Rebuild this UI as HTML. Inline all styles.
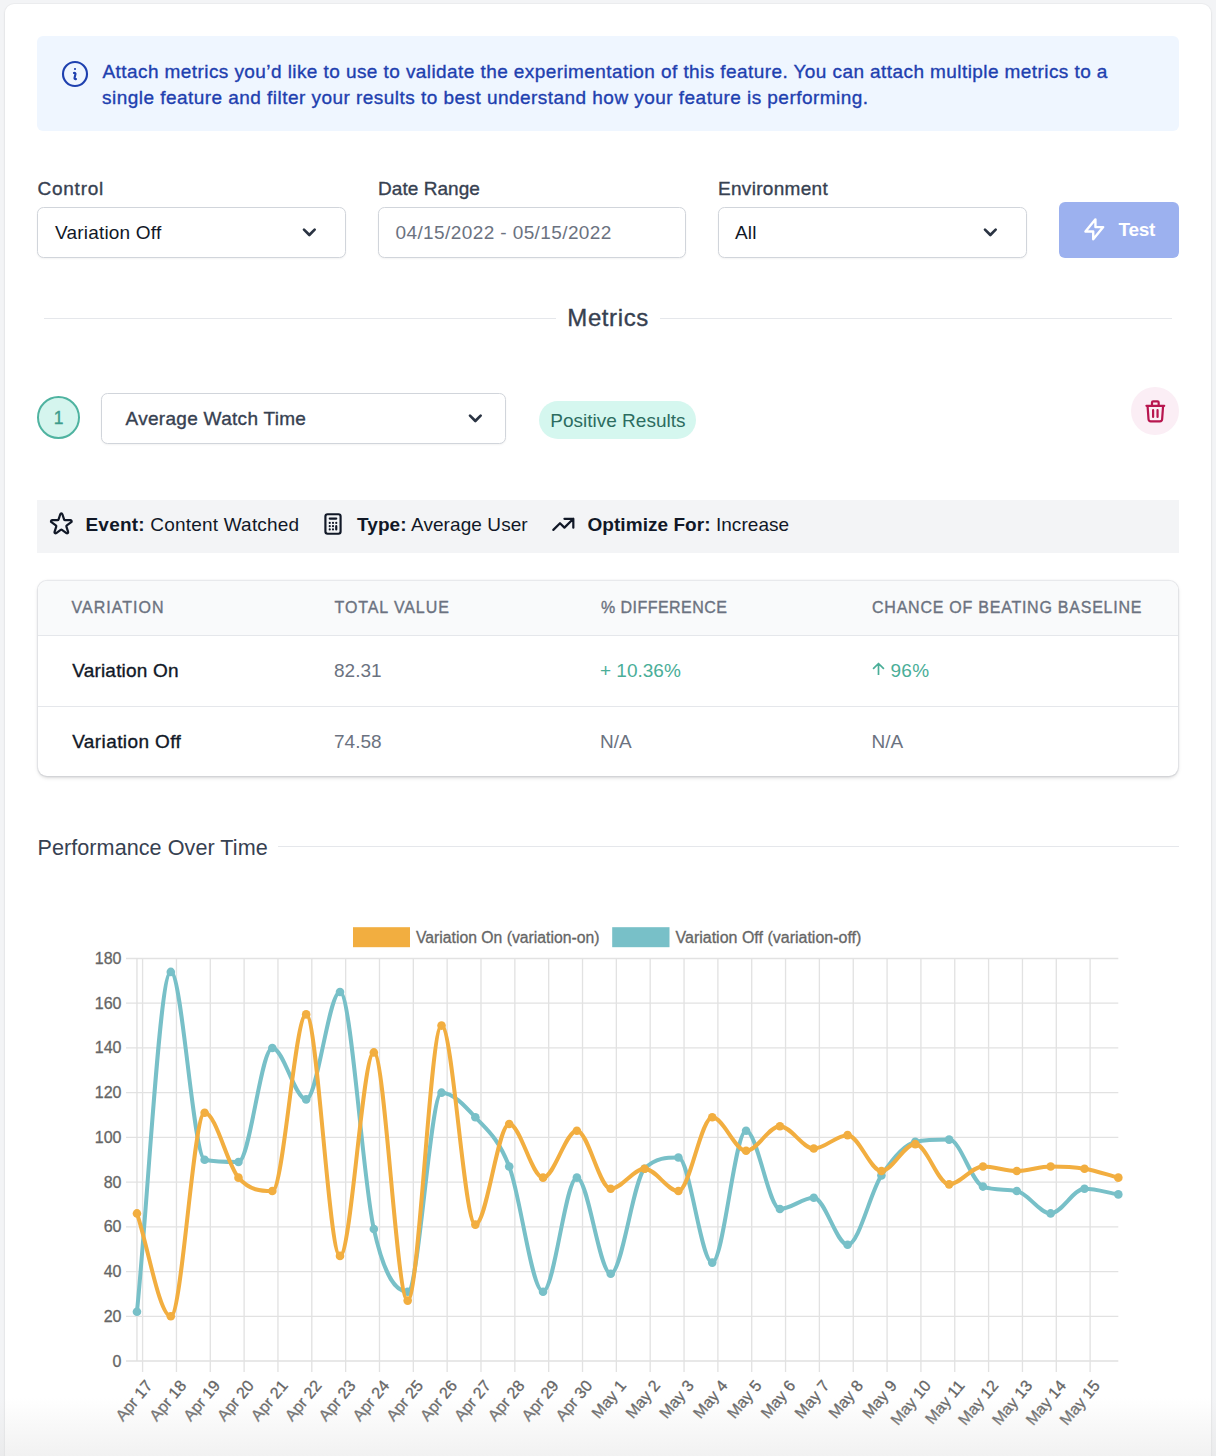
<!DOCTYPE html>
<html><head><meta charset="utf-8"><title>Metrics</title>
<style>
html,body{margin:0;padding:0;}
body{width:1216px;height:1456px;overflow:hidden;position:relative;background:#f3f4f6;font-family:"Liberation Sans",sans-serif;}
.t{position:absolute;white-space:nowrap;line-height:1;}
.chart text{font-family:"Liberation Sans",sans-serif;}
</style></head><body>
<div style="position:absolute;left:5.00px;top:4.00px;width:1206.00px;height:1520.00px;background:#fff;border-radius:9px;box-shadow:0 0 0 1px rgba(0,0,0,0.025),0 1px 3px rgba(0,0,0,0.07);"></div>
<div style="position:absolute;left:37.00px;top:36.00px;width:1142.00px;height:95.00px;background:#eff6ff;border-radius:6px;"></div>
<svg style="position:absolute;left:58.50px;top:57.50px" width="32.00" height="32.00" viewBox="0 0 24 24" fill="none" stroke="#1e40af" stroke-width="1.6" stroke-linecap="round" stroke-linejoin="round"><path d="m11.25 11.25.041-.02a.75.75 0 0 1 1.063.852l-.708 2.836a.75.75 0 0 0 1.063.853l.041-.021M21 12a9 9 0 1 1-18 0 9 9 0 0 1 18 0Zm-9-3.75h.008v.008H12V8.25Z"/></svg>
<div class="t" style="left:102.50px;top:61.92px;font-size:19.00px;color:#1e40af;letter-spacing:0.420px;-webkit-text-stroke:0.35px currentColor;">Attach metrics you’d like to use to validate the experimentation of this feature. You can attach multiple metrics to a</div>
<div class="t" style="left:102.00px;top:87.72px;font-size:19.00px;color:#1e40af;letter-spacing:0.460px;-webkit-text-stroke:0.35px currentColor;">single feature and filter your results to best understand how your feature is performing.</div>
<div class="t" style="left:37.50px;top:178.92px;font-size:19.00px;color:#374151;letter-spacing:0.750px;-webkit-text-stroke:0.35px currentColor;">Control</div>
<div class="t" style="left:378.00px;top:178.92px;font-size:19.00px;color:#374151;letter-spacing:0.050px;-webkit-text-stroke:0.35px currentColor;">Date Range</div>
<div class="t" style="left:718.00px;top:178.92px;font-size:19.00px;color:#374151;letter-spacing:0.300px;-webkit-text-stroke:0.35px currentColor;">Environment</div>
<div style="position:absolute;left:37.00px;top:207.00px;width:309.00px;height:51.00px;background:#fff;border:1.33px solid #d1d5db;border-radius:6.5px;box-sizing:border-box;box-shadow:0 1px 2px rgba(0,0,0,0.05);"></div>
<div class="t" style="left:55.00px;top:223.12px;font-size:19.00px;color:#111827;letter-spacing:0.200px;">Variation Off</div>
<svg style="position:absolute;left:296.00px;top:218.50px" width="26.67" height="26.67" viewBox="0 0 20 20" fill="#2b3443"><path fill-rule="evenodd" d="M5.293 7.293a1 1 0 011.414 0L10 10.586l3.293-3.293a1 1 0 111.414 1.414l-4 4a1 1 0 01-1.414 0l-4-4a1 1 0 010-1.414z" clip-rule="evenodd"/></svg>
<div style="position:absolute;left:378.00px;top:207.00px;width:308.00px;height:51.00px;background:#fff;border:1.33px solid #d1d5db;border-radius:6.5px;box-sizing:border-box;box-shadow:0 1px 2px rgba(0,0,0,0.05);"></div>
<div class="t" style="left:395.50px;top:223.12px;font-size:19.00px;color:#6b7280;letter-spacing:0.400px;">04/15/2022 - 05/15/2022</div>
<div style="position:absolute;left:718.00px;top:207.00px;width:309.00px;height:51.00px;background:#fff;border:1.33px solid #d1d5db;border-radius:6.5px;box-sizing:border-box;box-shadow:0 1px 2px rgba(0,0,0,0.05);"></div>
<div class="t" style="left:735.00px;top:223.12px;font-size:19.00px;color:#111827;letter-spacing:0.200px;">All</div>
<svg style="position:absolute;left:977.00px;top:218.50px" width="26.67" height="26.67" viewBox="0 0 20 20" fill="#2b3443"><path fill-rule="evenodd" d="M5.293 7.293a1 1 0 011.414 0L10 10.586l3.293-3.293a1 1 0 111.414 1.414l-4 4a1 1 0 01-1.414 0l-4-4a1 1 0 010-1.414z" clip-rule="evenodd"/></svg>
<div style="position:absolute;left:1059.00px;top:202.00px;width:120.00px;height:56.00px;background:#9cb1ef;border-radius:6px;"></div>
<svg style="position:absolute;left:1081.20px;top:216.00px" width="26.67" height="26.67" viewBox="0 0 24 24" fill="none" stroke="#fff" stroke-width="2.15" stroke-linecap="round" stroke-linejoin="round"><path d="M13 10V3L4 14h7v7l9-11h-7z"/></svg>
<div class="t" style="left:1118.50px;top:219.92px;font-size:19.00px;color:#fff;font-weight:700;letter-spacing:-0.300px;">Test</div>
<div style="position:absolute;left:44.00px;top:318.00px;width:512.00px;height:1.33px;background:#e5e7eb;"></div>
<div style="position:absolute;left:660.00px;top:318.00px;width:512.00px;height:1.33px;background:#e5e7eb;"></div>
<div class="t" style="left:567.30px;top:306.38px;font-size:24.00px;color:#374151;letter-spacing:0.600px;-webkit-text-stroke:0.35px currentColor;">Metrics</div>
<div style="position:absolute;left:37.00px;top:396.00px;width:43.00px;height:43.00px;background:#d5f5ee;border:2px solid #4fb3a0;border-radius:50%;box-sizing:border-box;"></div>
<div class="t" style="left:53.80px;top:409.79px;font-size:17.50px;color:#3e9c8c;-webkit-text-stroke:0.35px currentColor;">1</div>
<div style="position:absolute;left:101.00px;top:393.00px;width:405.00px;height:51.00px;background:#fff;border:1.33px solid #d1d5db;border-radius:6.5px;box-sizing:border-box;box-shadow:0 1px 2px rgba(0,0,0,0.05);"></div>
<div class="t" style="left:125.50px;top:408.72px;font-size:19.00px;color:#374151;letter-spacing:0.300px;-webkit-text-stroke:0.35px currentColor;">Average Watch Time</div>
<svg style="position:absolute;left:462.00px;top:405.00px" width="26.67" height="26.67" viewBox="0 0 20 20" fill="#2b3443"><path fill-rule="evenodd" d="M5.293 7.293a1 1 0 011.414 0L10 10.586l3.293-3.293a1 1 0 111.414 1.414l-4 4a1 1 0 01-1.414 0l-4-4a1 1 0 010-1.414z" clip-rule="evenodd"/></svg>
<div style="position:absolute;left:539.00px;top:401.00px;width:157.00px;height:38.00px;background:#d5f7ef;border-radius:19px;"></div>
<div class="t" style="left:550.30px;top:410.82px;font-size:19.00px;color:#2c6c5f;">Positive Results</div>
<div style="position:absolute;left:1131.00px;top:387.00px;width:48.00px;height:48.00px;background:#fbeef5;border-radius:50%;"></div>
<svg style="position:absolute;left:1141.70px;top:397.70px" width="26.67" height="26.67" viewBox="0 0 24 24" fill="none" stroke="#b8164f" stroke-width="2" stroke-linecap="round" stroke-linejoin="round"><path d="M19 7l-.867 12.142A2 2 0 0116.138 21H7.862a2 2 0 01-1.995-1.858L5 7m5 4v6m4-6v6m1-10V4a1 1 0 00-1-1h-4a1 1 0 00-1 1v3M4 7h16"/></svg>
<div style="position:absolute;left:37.00px;top:500.00px;width:1142.00px;height:52.50px;background:#f3f4f6;"></div>
<svg style="position:absolute;left:48.30px;top:511.00px" width="26.67" height="26.67" viewBox="0 0 24 24" fill="none" stroke="#111827" stroke-width="2" stroke-linecap="round" stroke-linejoin="round"><path d="M11.049 2.927c.3-.921 1.603-.921 1.902 0l1.519 4.674a1 1 0 00.95.69h4.915c.969 0 1.371 1.24.588 1.81l-3.976 2.888a1 1 0 00-.363 1.118l1.518 4.674c.3.922-.755 1.688-1.538 1.118l-3.976-2.888a1 1 0 00-1.176 0l-3.976 2.888c-.783.57-1.838-.197-1.538-1.118l1.518-4.674a1 1 0 00-.363-1.118l-3.976-2.888c-.784-.57-.38-1.81.588-1.81h4.914a1 1 0 00.951-.69l1.519-4.674z"/></svg>
<svg style="position:absolute;left:319.50px;top:511.00px" width="26.00" height="26.00" viewBox="0 0 24 24" fill="none" stroke="#111827" stroke-width="2" stroke-linecap="round" stroke-linejoin="round"><path d="M9 7h6m0 10v-3m-3 3h.01M9 17h.01M9 14h.01M12 14h.01M15 11h.01M12 11h.01M9 11h.01M7 21h10a2 2 0 002-2V5a2 2 0 00-2-2H7a2 2 0 00-2 2v14a2 2 0 002 2z"/></svg>
<svg style="position:absolute;left:550.00px;top:511.00px" width="26.67" height="26.67" viewBox="0 0 24 24" fill="none" stroke="#111827" stroke-width="2" stroke-linecap="round" stroke-linejoin="round"><path d="M13 7h8m0 0v8m0-8l-8 8-4-4-6 6"/></svg>
<div class="t" style="left:85.5px;top:514.62px;font-size:19px;color:#111827;letter-spacing:0.2px"><b>Event:</b> Content Watched</div>
<div class="t" style="left:357px;top:514.62px;font-size:19px;color:#111827;letter-spacing:0.08px"><b>Type:</b> Average User</div>
<div class="t" style="left:587.5px;top:514.62px;font-size:19px;color:#111827;letter-spacing:0.05px"><b>Optimize For:</b> Increase</div>
<div style="position:absolute;left:38.40px;top:581.00px;width:1139.20px;height:194.60px;background:#fff;border-radius:9px;box-shadow:0 0 0 1.2px rgba(30,41,80,0.07),0 1.33px 4px rgba(0,0,0,0.1),0 1.33px 2.67px rgba(0,0,0,0.05);"></div>
<div style="position:absolute;left:38.40px;top:581.00px;width:1139.20px;height:54.50px;background:#f9fafb;border-radius:9px 9px 0 0;"></div>
<div style="position:absolute;left:38.40px;top:635.00px;width:1139.20px;height:1.33px;background:#e5e7eb;"></div>
<div style="position:absolute;left:38.40px;top:705.50px;width:1139.20px;height:1.33px;background:#e5e7eb;"></div>
<div class="t" style="left:71.50px;top:599.56px;font-size:16.00px;color:#6b7280;letter-spacing:1.030px;-webkit-text-stroke:0.35px currentColor;">VARIATION</div>
<div class="t" style="left:334.50px;top:599.56px;font-size:16.00px;color:#6b7280;letter-spacing:0.910px;-webkit-text-stroke:0.35px currentColor;">TOTAL VALUE</div>
<div class="t" style="left:601.00px;top:599.56px;font-size:16.00px;color:#6b7280;letter-spacing:0.450px;-webkit-text-stroke:0.35px currentColor;">% DIFFERENCE</div>
<div class="t" style="left:872.00px;top:599.56px;font-size:16.00px;color:#6b7280;letter-spacing:0.760px;-webkit-text-stroke:0.35px currentColor;">CHANCE OF BEATING BASELINE</div>
<div class="t" style="left:72.20px;top:660.82px;font-size:19.00px;color:#111827;letter-spacing:0.200px;-webkit-text-stroke:0.35px currentColor;">Variation On</div>
<div class="t" style="left:334.00px;top:660.82px;font-size:19.00px;color:#6b7280;">82.31</div>
<div class="t" style="left:600.00px;top:660.82px;font-size:19.00px;color:#4aae98;">+ 10.36%</div>
<svg style="position:absolute;left:871.50px;top:662.00px" width="13.00" height="13.00" viewBox="0 0 13 13" fill="none" stroke="#4aae98" stroke-width="1.7" stroke-linecap="round" stroke-linejoin="round"><path d="M6.5 1.5V14.5M1.6 6.4L6.5 1.5L11.4 6.4"/></svg>
<div class="t" style="left:890.50px;top:660.82px;font-size:19.00px;color:#4aae98;letter-spacing:0.300px;">96%</div>
<div class="t" style="left:72.20px;top:731.62px;font-size:19.00px;color:#111827;letter-spacing:0.400px;-webkit-text-stroke:0.35px currentColor;">Variation Off</div>
<div class="t" style="left:334.00px;top:731.62px;font-size:19.00px;color:#6b7280;">74.58</div>
<div class="t" style="left:600.00px;top:731.62px;font-size:19.00px;color:#6b7280;">N/A</div>
<div class="t" style="left:871.50px;top:731.62px;font-size:19.00px;color:#6b7280;">N/A</div>
<div class="t" style="left:37.50px;top:836.72px;font-size:21.60px;color:#374151;letter-spacing:0.050px;">Performance Over Time</div>
<div style="position:absolute;left:278.00px;top:846.00px;width:901.00px;height:1.33px;background:#e5e7eb;"></div>
<svg class="chart" width="1216" height="1456" viewBox="0 0 1216 1456" style="position:absolute;left:0;top:0">
<line x1="126" y1="1361.0" x2="1118.3" y2="1361.0" stroke="#e0e0e0" stroke-width="1.33"/>
<line x1="126" y1="1316.3" x2="1118.3" y2="1316.3" stroke="#e2e2e2" stroke-width="1.33"/>
<line x1="126" y1="1271.6" x2="1118.3" y2="1271.6" stroke="#e2e2e2" stroke-width="1.33"/>
<line x1="126" y1="1226.8" x2="1118.3" y2="1226.8" stroke="#e2e2e2" stroke-width="1.33"/>
<line x1="126" y1="1182.1" x2="1118.3" y2="1182.1" stroke="#e2e2e2" stroke-width="1.33"/>
<line x1="126" y1="1137.4" x2="1118.3" y2="1137.4" stroke="#e2e2e2" stroke-width="1.33"/>
<line x1="126" y1="1092.7" x2="1118.3" y2="1092.7" stroke="#e2e2e2" stroke-width="1.33"/>
<line x1="126" y1="1047.9" x2="1118.3" y2="1047.9" stroke="#e2e2e2" stroke-width="1.33"/>
<line x1="126" y1="1003.2" x2="1118.3" y2="1003.2" stroke="#e2e2e2" stroke-width="1.33"/>
<line x1="126" y1="958.5" x2="1118.3" y2="958.5" stroke="#e2e2e2" stroke-width="1.33"/>
<line x1="136.96" y1="958.5" x2="136.96" y2="1361" stroke="#e0e0e0" stroke-width="1.33"/>
<line x1="142.60" y1="958.5" x2="142.60" y2="1372" stroke="#e2e2e2" stroke-width="1.33"/>
<line x1="176.44" y1="958.5" x2="176.44" y2="1372" stroke="#e2e2e2" stroke-width="1.33"/>
<line x1="210.28" y1="958.5" x2="210.28" y2="1372" stroke="#e2e2e2" stroke-width="1.33"/>
<line x1="244.12" y1="958.5" x2="244.12" y2="1372" stroke="#e2e2e2" stroke-width="1.33"/>
<line x1="277.96" y1="958.5" x2="277.96" y2="1372" stroke="#e2e2e2" stroke-width="1.33"/>
<line x1="311.80" y1="958.5" x2="311.80" y2="1372" stroke="#e2e2e2" stroke-width="1.33"/>
<line x1="345.64" y1="958.5" x2="345.64" y2="1372" stroke="#e2e2e2" stroke-width="1.33"/>
<line x1="379.48" y1="958.5" x2="379.48" y2="1372" stroke="#e2e2e2" stroke-width="1.33"/>
<line x1="413.32" y1="958.5" x2="413.32" y2="1372" stroke="#e2e2e2" stroke-width="1.33"/>
<line x1="447.16" y1="958.5" x2="447.16" y2="1372" stroke="#e2e2e2" stroke-width="1.33"/>
<line x1="481.00" y1="958.5" x2="481.00" y2="1372" stroke="#e2e2e2" stroke-width="1.33"/>
<line x1="514.84" y1="958.5" x2="514.84" y2="1372" stroke="#e2e2e2" stroke-width="1.33"/>
<line x1="548.68" y1="958.5" x2="548.68" y2="1372" stroke="#e2e2e2" stroke-width="1.33"/>
<line x1="582.52" y1="958.5" x2="582.52" y2="1372" stroke="#e2e2e2" stroke-width="1.33"/>
<line x1="616.36" y1="958.5" x2="616.36" y2="1372" stroke="#e2e2e2" stroke-width="1.33"/>
<line x1="650.20" y1="958.5" x2="650.20" y2="1372" stroke="#e2e2e2" stroke-width="1.33"/>
<line x1="684.04" y1="958.5" x2="684.04" y2="1372" stroke="#e2e2e2" stroke-width="1.33"/>
<line x1="717.88" y1="958.5" x2="717.88" y2="1372" stroke="#e2e2e2" stroke-width="1.33"/>
<line x1="751.72" y1="958.5" x2="751.72" y2="1372" stroke="#e2e2e2" stroke-width="1.33"/>
<line x1="785.56" y1="958.5" x2="785.56" y2="1372" stroke="#e2e2e2" stroke-width="1.33"/>
<line x1="819.40" y1="958.5" x2="819.40" y2="1372" stroke="#e2e2e2" stroke-width="1.33"/>
<line x1="853.24" y1="958.5" x2="853.24" y2="1372" stroke="#e2e2e2" stroke-width="1.33"/>
<line x1="887.08" y1="958.5" x2="887.08" y2="1372" stroke="#e2e2e2" stroke-width="1.33"/>
<line x1="920.92" y1="958.5" x2="920.92" y2="1372" stroke="#e2e2e2" stroke-width="1.33"/>
<line x1="954.76" y1="958.5" x2="954.76" y2="1372" stroke="#e2e2e2" stroke-width="1.33"/>
<line x1="988.60" y1="958.5" x2="988.60" y2="1372" stroke="#e2e2e2" stroke-width="1.33"/>
<line x1="1022.44" y1="958.5" x2="1022.44" y2="1372" stroke="#e2e2e2" stroke-width="1.33"/>
<line x1="1056.28" y1="958.5" x2="1056.28" y2="1372" stroke="#e2e2e2" stroke-width="1.33"/>
<line x1="1090.12" y1="958.5" x2="1090.12" y2="1372" stroke="#e2e2e2" stroke-width="1.33"/>
<text x="121.5" y="1366.5" text-anchor="end" font-size="16" fill="#666" stroke="#666" stroke-width="0.3">0</text>
<text x="121.5" y="1321.8" text-anchor="end" font-size="16" fill="#666" stroke="#666" stroke-width="0.3">20</text>
<text x="121.5" y="1277.1" text-anchor="end" font-size="16" fill="#666" stroke="#666" stroke-width="0.3">40</text>
<text x="121.5" y="1232.3" text-anchor="end" font-size="16" fill="#666" stroke="#666" stroke-width="0.3">60</text>
<text x="121.5" y="1187.6" text-anchor="end" font-size="16" fill="#666" stroke="#666" stroke-width="0.3">80</text>
<text x="121.5" y="1142.9" text-anchor="end" font-size="16" fill="#666" stroke="#666" stroke-width="0.3">100</text>
<text x="121.5" y="1098.2" text-anchor="end" font-size="16" fill="#666" stroke="#666" stroke-width="0.3">120</text>
<text x="121.5" y="1053.4" text-anchor="end" font-size="16" fill="#666" stroke="#666" stroke-width="0.3">140</text>
<text x="121.5" y="1008.7" text-anchor="end" font-size="16" fill="#666" stroke="#666" stroke-width="0.3">160</text>
<text x="121.5" y="964.0" text-anchor="end" font-size="16" fill="#666" stroke="#666" stroke-width="0.3">180</text>
<text transform="translate(149.10 1382.5) rotate(-50)" text-anchor="end" dy="5.5" font-size="16" fill="#666" stroke="#666" stroke-width="0.3">Apr 17</text>
<text transform="translate(182.94 1382.5) rotate(-50)" text-anchor="end" dy="5.5" font-size="16" fill="#666" stroke="#666" stroke-width="0.3">Apr 18</text>
<text transform="translate(216.78 1382.5) rotate(-50)" text-anchor="end" dy="5.5" font-size="16" fill="#666" stroke="#666" stroke-width="0.3">Apr 19</text>
<text transform="translate(250.62 1382.5) rotate(-50)" text-anchor="end" dy="5.5" font-size="16" fill="#666" stroke="#666" stroke-width="0.3">Apr 20</text>
<text transform="translate(284.46 1382.5) rotate(-50)" text-anchor="end" dy="5.5" font-size="16" fill="#666" stroke="#666" stroke-width="0.3">Apr 21</text>
<text transform="translate(318.30 1382.5) rotate(-50)" text-anchor="end" dy="5.5" font-size="16" fill="#666" stroke="#666" stroke-width="0.3">Apr 22</text>
<text transform="translate(352.14 1382.5) rotate(-50)" text-anchor="end" dy="5.5" font-size="16" fill="#666" stroke="#666" stroke-width="0.3">Apr 23</text>
<text transform="translate(385.98 1382.5) rotate(-50)" text-anchor="end" dy="5.5" font-size="16" fill="#666" stroke="#666" stroke-width="0.3">Apr 24</text>
<text transform="translate(419.82 1382.5) rotate(-50)" text-anchor="end" dy="5.5" font-size="16" fill="#666" stroke="#666" stroke-width="0.3">Apr 25</text>
<text transform="translate(453.66 1382.5) rotate(-50)" text-anchor="end" dy="5.5" font-size="16" fill="#666" stroke="#666" stroke-width="0.3">Apr 26</text>
<text transform="translate(487.50 1382.5) rotate(-50)" text-anchor="end" dy="5.5" font-size="16" fill="#666" stroke="#666" stroke-width="0.3">Apr 27</text>
<text transform="translate(521.34 1382.5) rotate(-50)" text-anchor="end" dy="5.5" font-size="16" fill="#666" stroke="#666" stroke-width="0.3">Apr 28</text>
<text transform="translate(555.18 1382.5) rotate(-50)" text-anchor="end" dy="5.5" font-size="16" fill="#666" stroke="#666" stroke-width="0.3">Apr 29</text>
<text transform="translate(589.02 1382.5) rotate(-50)" text-anchor="end" dy="5.5" font-size="16" fill="#666" stroke="#666" stroke-width="0.3">Apr 30</text>
<text transform="translate(622.86 1382.5) rotate(-50)" text-anchor="end" dy="5.5" font-size="16" fill="#666" stroke="#666" stroke-width="0.3">May 1</text>
<text transform="translate(656.70 1382.5) rotate(-50)" text-anchor="end" dy="5.5" font-size="16" fill="#666" stroke="#666" stroke-width="0.3">May 2</text>
<text transform="translate(690.54 1382.5) rotate(-50)" text-anchor="end" dy="5.5" font-size="16" fill="#666" stroke="#666" stroke-width="0.3">May 3</text>
<text transform="translate(724.38 1382.5) rotate(-50)" text-anchor="end" dy="5.5" font-size="16" fill="#666" stroke="#666" stroke-width="0.3">May 4</text>
<text transform="translate(758.22 1382.5) rotate(-50)" text-anchor="end" dy="5.5" font-size="16" fill="#666" stroke="#666" stroke-width="0.3">May 5</text>
<text transform="translate(792.06 1382.5) rotate(-50)" text-anchor="end" dy="5.5" font-size="16" fill="#666" stroke="#666" stroke-width="0.3">May 6</text>
<text transform="translate(825.90 1382.5) rotate(-50)" text-anchor="end" dy="5.5" font-size="16" fill="#666" stroke="#666" stroke-width="0.3">May 7</text>
<text transform="translate(859.74 1382.5) rotate(-50)" text-anchor="end" dy="5.5" font-size="16" fill="#666" stroke="#666" stroke-width="0.3">May 8</text>
<text transform="translate(893.58 1382.5) rotate(-50)" text-anchor="end" dy="5.5" font-size="16" fill="#666" stroke="#666" stroke-width="0.3">May 9</text>
<text transform="translate(927.42 1382.5) rotate(-50)" text-anchor="end" dy="5.5" font-size="16" fill="#666" stroke="#666" stroke-width="0.3">May 10</text>
<text transform="translate(961.26 1382.5) rotate(-50)" text-anchor="end" dy="5.5" font-size="16" fill="#666" stroke="#666" stroke-width="0.3">May 11</text>
<text transform="translate(995.10 1382.5) rotate(-50)" text-anchor="end" dy="5.5" font-size="16" fill="#666" stroke="#666" stroke-width="0.3">May 12</text>
<text transform="translate(1028.94 1382.5) rotate(-50)" text-anchor="end" dy="5.5" font-size="16" fill="#666" stroke="#666" stroke-width="0.3">May 13</text>
<text transform="translate(1062.78 1382.5) rotate(-50)" text-anchor="end" dy="5.5" font-size="16" fill="#666" stroke="#666" stroke-width="0.3">May 14</text>
<text transform="translate(1096.62 1382.5) rotate(-50)" text-anchor="end" dy="5.5" font-size="16" fill="#666" stroke="#666" stroke-width="0.3">May 15</text>
<path d="M136.96 1311.81 C148.24 1198.51 159.52 971.92 170.80 971.92 C182.08 971.92 193.36 1157.51 204.64 1159.75 C215.92 1161.99 227.20 1161.99 238.48 1161.99 C249.76 1161.99 261.04 1047.94 272.32 1047.94 C283.60 1047.94 294.88 1099.38 306.16 1099.38 C317.44 1099.38 328.72 992.04 340.00 992.04 C351.28 992.04 362.56 1179.13 373.84 1229.07 C385.12 1279.01 396.40 1291.68 407.68 1291.68 C418.96 1291.68 430.24 1092.67 441.52 1092.67 C452.80 1092.67 464.08 1104.97 475.36 1117.26 C486.64 1129.56 497.92 1137.39 509.20 1166.46 C520.48 1195.53 531.76 1291.68 543.04 1291.68 C554.32 1291.68 565.60 1177.64 576.88 1177.64 C588.16 1177.64 599.44 1273.79 610.72 1273.79 C622.00 1273.79 633.28 1179.87 644.56 1168.69 C655.84 1157.51 667.12 1157.51 678.40 1157.51 C689.68 1157.51 700.96 1262.61 712.24 1262.61 C723.52 1262.61 734.80 1130.68 746.08 1130.68 C757.36 1130.68 768.64 1208.94 779.92 1208.94 C791.20 1208.94 802.48 1197.76 813.76 1197.76 C825.04 1197.76 836.32 1244.72 847.60 1244.72 C858.88 1244.72 870.16 1192.55 881.44 1175.40 C892.72 1158.26 904.00 1144.10 915.28 1141.86 C926.56 1139.62 937.84 1139.62 949.12 1139.62 C960.40 1139.62 971.68 1182.62 982.96 1186.58 C994.24 1190.55 1005.52 1188.99 1016.80 1191.06 C1028.08 1193.12 1039.36 1213.42 1050.64 1213.42 C1061.92 1213.42 1073.20 1188.82 1084.48 1188.82 C1095.76 1188.82 1107.04 1192.55 1118.32 1194.41" fill="none" stroke="#78c0c8" stroke-width="4"/>
<circle cx="136.96" cy="1311.81" r="4.3" fill="#78c0c8"/>
<circle cx="170.80" cy="971.92" r="4.3" fill="#78c0c8"/>
<circle cx="204.64" cy="1159.75" r="4.3" fill="#78c0c8"/>
<circle cx="238.48" cy="1161.99" r="4.3" fill="#78c0c8"/>
<circle cx="272.32" cy="1047.94" r="4.3" fill="#78c0c8"/>
<circle cx="306.16" cy="1099.38" r="4.3" fill="#78c0c8"/>
<circle cx="340.00" cy="992.04" r="4.3" fill="#78c0c8"/>
<circle cx="373.84" cy="1229.07" r="4.3" fill="#78c0c8"/>
<circle cx="407.68" cy="1291.68" r="4.3" fill="#78c0c8"/>
<circle cx="441.52" cy="1092.67" r="4.3" fill="#78c0c8"/>
<circle cx="475.36" cy="1117.26" r="4.3" fill="#78c0c8"/>
<circle cx="509.20" cy="1166.46" r="4.3" fill="#78c0c8"/>
<circle cx="543.04" cy="1291.68" r="4.3" fill="#78c0c8"/>
<circle cx="576.88" cy="1177.64" r="4.3" fill="#78c0c8"/>
<circle cx="610.72" cy="1273.79" r="4.3" fill="#78c0c8"/>
<circle cx="644.56" cy="1168.69" r="4.3" fill="#78c0c8"/>
<circle cx="678.40" cy="1157.51" r="4.3" fill="#78c0c8"/>
<circle cx="712.24" cy="1262.61" r="4.3" fill="#78c0c8"/>
<circle cx="746.08" cy="1130.68" r="4.3" fill="#78c0c8"/>
<circle cx="779.92" cy="1208.94" r="4.3" fill="#78c0c8"/>
<circle cx="813.76" cy="1197.76" r="4.3" fill="#78c0c8"/>
<circle cx="847.60" cy="1244.72" r="4.3" fill="#78c0c8"/>
<circle cx="881.44" cy="1175.40" r="4.3" fill="#78c0c8"/>
<circle cx="915.28" cy="1141.86" r="4.3" fill="#78c0c8"/>
<circle cx="949.12" cy="1139.62" r="4.3" fill="#78c0c8"/>
<circle cx="982.96" cy="1186.58" r="4.3" fill="#78c0c8"/>
<circle cx="1016.80" cy="1191.06" r="4.3" fill="#78c0c8"/>
<circle cx="1050.64" cy="1213.42" r="4.3" fill="#78c0c8"/>
<circle cx="1084.48" cy="1188.82" r="4.3" fill="#78c0c8"/>
<circle cx="1118.32" cy="1194.41" r="4.3" fill="#78c0c8"/>
<path d="M136.96 1213.42 C148.24 1247.70 159.52 1316.28 170.80 1316.28 C182.08 1316.28 193.36 1112.79 204.64 1112.79 C215.92 1112.79 227.20 1164.59 238.48 1177.64 C249.76 1190.68 261.04 1191.06 272.32 1191.06 C283.60 1191.06 294.88 1014.40 306.16 1014.40 C317.44 1014.40 328.72 1255.90 340.00 1255.90 C351.28 1255.90 362.56 1052.42 373.84 1052.42 C385.12 1052.42 396.40 1300.62 407.68 1300.62 C418.96 1300.62 430.24 1025.58 441.52 1025.58 C452.80 1025.58 464.08 1224.60 475.36 1224.60 C486.64 1224.60 497.92 1123.97 509.20 1123.97 C520.48 1123.97 531.76 1177.64 543.04 1177.64 C554.32 1177.64 565.60 1130.68 576.88 1130.68 C588.16 1130.68 599.44 1188.82 610.72 1188.82 C622.00 1188.82 633.28 1168.69 644.56 1168.69 C655.84 1168.69 667.12 1191.06 678.40 1191.06 C689.68 1191.06 700.96 1117.26 712.24 1117.26 C723.52 1117.26 734.80 1150.81 746.08 1150.81 C757.36 1150.81 768.64 1126.21 779.92 1126.21 C791.20 1126.21 802.48 1148.57 813.76 1148.57 C825.04 1148.57 836.32 1135.15 847.60 1135.15 C858.88 1135.15 870.16 1170.93 881.44 1170.93 C892.72 1170.93 904.00 1144.10 915.28 1144.10 C926.56 1144.10 937.84 1184.35 949.12 1184.35 C960.40 1184.35 971.68 1166.46 982.96 1166.46 C994.24 1166.46 1005.52 1170.93 1016.80 1170.93 C1028.08 1170.93 1039.36 1166.46 1050.64 1166.46 C1061.92 1166.46 1073.20 1166.83 1084.48 1168.69 C1095.76 1170.56 1107.04 1174.66 1118.32 1177.64" fill="none" stroke="#f2ae40" stroke-width="4"/>
<circle cx="136.96" cy="1213.42" r="4.3" fill="#f2ae40"/>
<circle cx="170.80" cy="1316.28" r="4.3" fill="#f2ae40"/>
<circle cx="204.64" cy="1112.79" r="4.3" fill="#f2ae40"/>
<circle cx="238.48" cy="1177.64" r="4.3" fill="#f2ae40"/>
<circle cx="272.32" cy="1191.06" r="4.3" fill="#f2ae40"/>
<circle cx="306.16" cy="1014.40" r="4.3" fill="#f2ae40"/>
<circle cx="340.00" cy="1255.90" r="4.3" fill="#f2ae40"/>
<circle cx="373.84" cy="1052.42" r="4.3" fill="#f2ae40"/>
<circle cx="407.68" cy="1300.62" r="4.3" fill="#f2ae40"/>
<circle cx="441.52" cy="1025.58" r="4.3" fill="#f2ae40"/>
<circle cx="475.36" cy="1224.60" r="4.3" fill="#f2ae40"/>
<circle cx="509.20" cy="1123.97" r="4.3" fill="#f2ae40"/>
<circle cx="543.04" cy="1177.64" r="4.3" fill="#f2ae40"/>
<circle cx="576.88" cy="1130.68" r="4.3" fill="#f2ae40"/>
<circle cx="610.72" cy="1188.82" r="4.3" fill="#f2ae40"/>
<circle cx="644.56" cy="1168.69" r="4.3" fill="#f2ae40"/>
<circle cx="678.40" cy="1191.06" r="4.3" fill="#f2ae40"/>
<circle cx="712.24" cy="1117.26" r="4.3" fill="#f2ae40"/>
<circle cx="746.08" cy="1150.81" r="4.3" fill="#f2ae40"/>
<circle cx="779.92" cy="1126.21" r="4.3" fill="#f2ae40"/>
<circle cx="813.76" cy="1148.57" r="4.3" fill="#f2ae40"/>
<circle cx="847.60" cy="1135.15" r="4.3" fill="#f2ae40"/>
<circle cx="881.44" cy="1170.93" r="4.3" fill="#f2ae40"/>
<circle cx="915.28" cy="1144.10" r="4.3" fill="#f2ae40"/>
<circle cx="949.12" cy="1184.35" r="4.3" fill="#f2ae40"/>
<circle cx="982.96" cy="1166.46" r="4.3" fill="#f2ae40"/>
<circle cx="1016.80" cy="1170.93" r="4.3" fill="#f2ae40"/>
<circle cx="1050.64" cy="1166.46" r="4.3" fill="#f2ae40"/>
<circle cx="1084.48" cy="1168.69" r="4.3" fill="#f2ae40"/>
<circle cx="1118.32" cy="1177.64" r="4.3" fill="#f2ae40"/>
<rect x="353" y="927.2" width="57" height="20" fill="#f2ae40"/>
<text x="416" y="942.8" font-size="16" fill="#666" stroke="#666" stroke-width="0.3" textLength="183.5" lengthAdjust="spacingAndGlyphs">Variation On (variation-on)</text>
<rect x="612.2" y="927.2" width="57.3" height="20" fill="#78c0c8"/>
<text x="675.5" y="942.8" font-size="16" fill="#666" stroke="#666" stroke-width="0.3">Variation Off (variation-off)</text>
</svg>
<div style="position:absolute;left:0;top:1398px;width:1216px;height:58px;background:linear-gradient(to bottom,rgba(225,225,225,0),rgba(225,225,225,0.45));"></div>
</body></html>
